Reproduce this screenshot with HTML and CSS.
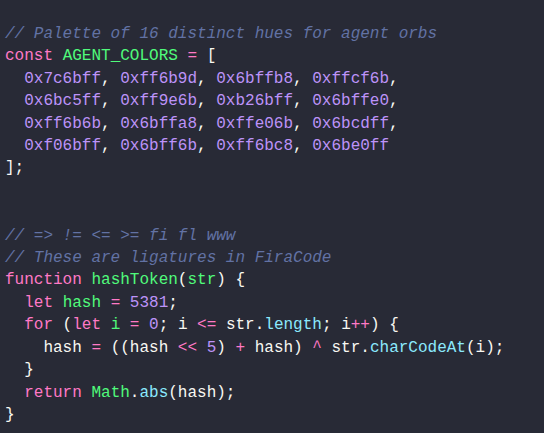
FILE: index.html
```html
<!DOCTYPE html>
<html>
<head>
<meta charset="utf-8">
<link rel="stylesheet" href="styles.css">
</head>
<body>
<pre class="code"><span class="c">// Palette of 16 distinct hues for agent orbs</span>
<span class="k">const</span> <span class="g">AGENT_COLORS</span> <span class="k">=</span> [
  <span class="n">0x7c6bff</span>, <span class="n">0xff6b9d</span>, <span class="n">0x6bffb8</span>, <span class="n">0xffcf6b</span>,
  <span class="n">0x6bc5ff</span>, <span class="n">0xff9e6b</span>, <span class="n">0xb26bff</span>, <span class="n">0x6bffe0</span>,
  <span class="n">0xff6b6b</span>, <span class="n">0x6bffa8</span>, <span class="n">0xffe06b</span>, <span class="n">0x6bcdff</span>,
  <span class="n">0xf06bff</span>, <span class="n">0x6bff6b</span>, <span class="n">0xff6bc8</span>, <span class="n">0x6be0ff</span>
];


<span class="c">// =&gt; != &lt;= &gt;= fi fl www</span>
<span class="c">// These are ligatures in FiraCode</span>
<span class="k">function</span> <span class="g">hashToken</span>(<span class="p">str</span>) {
  <span class="k">let</span> <span class="g">hash</span> <span class="k">=</span> <span class="n">5381</span>;
  <span class="k">for</span> (<span class="k">let</span> <span class="g">i</span> <span class="k">=</span> <span class="n">0</span>; i <span class="k">&lt;=</span> str.<span class="f">length</span>; i<span class="k">++</span>) {
    hash <span class="k">=</span> ((hash <span class="k">&lt;&lt;</span> <span class="n">5</span>) <span class="k">+</span> hash) <span class="k">^</span> str.<span class="f">charCodeAt</span>(i);
  }
  <span class="k">return</span> <span class="g">Math</span>.<span class="f">abs</span>(hash);
}</pre>
</body>
</html>
```

FILE: styles.css
```css
html, body {
  margin: 0;
  padding: 0;
  background: #282a36;
}
.code {
  margin: 0;
  padding: 23px 5px 0;
  font-family: "Liberation Mono", "DejaVu Sans Mono", monospace;
  font-size: 16px;
  line-height: 22.4px;
  color: #f8f8f2;
  background: #282a36;
  min-height: 433px;
  box-sizing: border-box;
}
.c { color: #6272a4; font-style: italic; }
.k { color: #ff79c6; }
.g { color: #50fa7b; }
.n { color: #bd93f9; }
.f { color: #8be9fd; }
.p { color: #50fa7b; }
```
